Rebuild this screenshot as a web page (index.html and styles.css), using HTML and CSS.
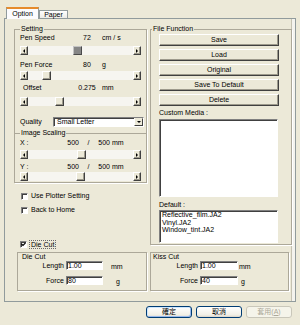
FILE: index.html
```html
<!DOCTYPE html>
<html lang="en">
<head>
    <meta charset="UTF-8">
    <title>Plotter Options</title>
    <link rel="stylesheet" href="styles.css">
</head>
<body>
    <div class="dialog">
        <div class="tabs">
            <div class="tab active">Option</div>
            <div class="tab">Paper</div>
        </div>

        <div class="panel">
            <div class="cols">
                <div class="col-left">
                    <fieldset class="group setting">
                        <legend>Setting</legend>
                        <div class="vrow"><span class="lbl">Pen Speed</span><span class="num">72</span><span class="unit">cm / s</span></div>
                        <div class="slider s1">
                            <span class="arr arr-l"></span>
                            <span class="track"><span class="thumb pressed" style="margin-left:45px"></span></span>
                            <span class="arr arr-r"></span>
                        </div>
                        <div class="vrow r2"><span class="lbl">Pen Force</span><span class="num">80</span><span class="unit">g</span></div>
                        <div class="slider s2">
                            <span class="arr arr-l"></span>
                            <span class="track"><span class="thumb" style="margin-left:14px"></span></span>
                            <span class="arr arr-r"></span>
                        </div>
                        <div class="vrow r3"><span class="lbl indent">Offset</span><span class="num">0.275</span><span class="unit">mm</span></div>
                        <div class="slider s3">
                            <span class="arr arr-l"></span>
                            <span class="track"><span class="thumb" style="margin-left:27px"></span></span>
                            <span class="arr arr-r"></span>
                        </div>
                        <div class="quality">
                            <span class="qlbl">Quality</span>
                            <div class="combo"><span class="combo-text">Small Letter</span><span class="combo-btn"></span></div>
                        </div>

                        <fieldset class="group scaling">
                            <legend>Image Scaling</legend>
                            <div class="srow"><span class="slbl">X :</span><span class="n">500</span><span class="sep">/</span><span class="n">500</span><span class="unit2">mm</span></div>
                            <div class="slider sx">
                                <span class="arr arr-l"></span>
                                <span class="track"><span class="thumb" style="margin-left:49px"></span></span>
                                <span class="arr arr-r"></span>
                            </div>
                            <div class="srow sy-row"><span class="slbl">Y :</span><span class="n">500</span><span class="sep">/</span><span class="n">500</span><span class="unit2">mm</span></div>
                            <div class="slider sy">
                                <span class="arr arr-l"></span>
                                <span class="track"><span class="thumb" style="margin-left:48px"></span></span>
                                <span class="arr arr-r"></span>
                            </div>
                        </fieldset>
                    </fieldset>

                    <label class="check plotter"><span class="box"></span>Use Plotter Setting</label>
                    <label class="check home"><span class="box"></span>Back to Home</label>
                    <label class="check diecut">
                        <span class="box"><svg width="5" height="5" viewBox="0 0 5 5"><polyline points="0.5,2 2,3.5 4.5,0.8" fill="none" stroke="#000" stroke-width="1.2"/></svg></span>
                        <span class="focus">Die Cut</span>
                    </label>
                </div>

                <fieldset class="group file-fn">
                    <legend>File Function</legend>
                    <div class="ff">
                        <div class="btn3d first">Save</div>
                        <div class="btn3d">Load</div>
                        <div class="btn3d">Original</div>
                        <div class="btn3d">Save To Default</div>
                        <div class="btn3d">Delete</div>
                        <div class="ff-label">Custom Media :</div>
                        <div class="list custom"></div>
                        <div class="ff-label def">Default :</div>
                        <div class="list default">
                            <div>Reflective_film.JA2</div>
                            <div>Vinyl.JA2</div>
                            <div>Window_tint.JA2</div>
                        </div>
                    </div>
                </fieldset>
            </div>

            <div class="cut-row">
                <div class="cutbox die">
                    <div class="cut-title">Die Cut</div>
                    <div class="crow"><span class="clbl">Length</span><input class="field" value="1.00"><span class="cunit mm">mm</span></div>
                    <div class="crow force"><span class="clbl">Force</span><input class="field" value="80"><span class="cunit g">g</span></div>
                </div>
                <div class="cutbox kiss">
                    <div class="cut-title">Kiss Cut</div>
                    <div class="crow"><span class="clbl">Length</span><input class="field" value="1.00"><span class="cunit mm">mm</span></div>
                    <div class="crow force"><span class="clbl">Force</span><input class="field" value="40"><span class="cunit g">g</span></div>
                </div>
            </div>
        </div>

        <div class="actions">
            <div class="xp-btn default">確定</div>
            <div class="xp-btn">取消</div>
            <div class="xp-btn disabled">套用(<u>A</u>)</div>
        </div>
    </div>
</body>
</html>
```

FILE: styles.css
```css
* {
    margin: 0;
    padding: 0;
    box-sizing: border-box;
}

body {
    width: 300px;
    height: 325px;
    overflow: hidden;
    background: #ece9d8;
    color: #000;
    font-family: "Liberation Sans", "Noto Sans CJK TC", sans-serif;
    font-size: 7px;
    line-height: 8px;
}

.dialog {
    padding: 7px 4px 0 4px;
}

/* tabs */
.tabs {
    position: relative;
    z-index: 1;
    display: flex;
    align-items: flex-end;
    height: 11px;
    margin-left: 2px;
}

.tab {
    width: 29px;
    height: 8px;
    border: 1px solid #919b9c;
    border-bottom: 0;
    background: linear-gradient(#ffffff, #ecebe6);
    text-align: center;
    line-height: 7px;
}

.tab.active {
    width: 33px;
    height: 12px;
    margin-bottom: -1px;
    border-top: 2px solid #e68b2c;
    background: #fcfcfe;
    line-height: 9px;
}

.panel {
    height: 284px;
    padding: 6px 4px 0 9px;
    border: 1px solid #919b9c;
    box-shadow: inset -3px 0 0 #f4f3ee, inset -4px 0 0 #c5c2b2;
    background: #ece9d8;
}

.cols {
    display: grid;
    grid-template-columns: 133px 142px;
    column-gap: 3px;
    align-items: start;
}

/* group boxes */
.group {
    border: 1px solid #aca899;
    box-shadow: 1px 1px 0 #fff;
}

.group legend {
    padding: 0 1px;
    line-height: 8px;
    background: #ece9d8;
}

.setting {
    padding: 1px 5px 0 5px;
}

.vrow {
    display: flex;
    height: 8px;
}

.vrow .lbl {
    width: 56px;
}

.vrow .lbl.indent {
    padding-left: 3px;
}

.vrow .num {
    width: 22px;
    text-align: center;
}

.vrow .unit {
    margin-left: 4px;
}

.r2 { margin-top: 6px; }
.r3 { margin-top: 4px; }

/* scroll bar style slider */
.slider {
    display: flex;
    height: 9px;
}

.s1 { margin-top: 4px; }
.s2 { margin-top: 2px; }
.s3 { margin-top: 5px; }
.sx { margin-top: 3px; }
.sy { margin-top: 1px; }

.arr {
    display: flex;
    align-items: center;
    justify-content: center;
    width: 8px;
    height: 9px;
    border: 1px solid;
    border-color: #fff #404040 #404040 #fff;
    box-shadow: inset -1px -1px 0 #9d9a8c;
    background: #ece9d8;
}

.arr::after {
    content: "";
    border-style: solid;
}

.arr-l::after {
    border-width: 2px 2px 2px 0;
    border-color: transparent #000 transparent transparent;
}

.arr-r::after {
    border-width: 2px 0 2px 2px;
    border-color: transparent transparent transparent #000;
}

.track {
    flex: 1;
    background: #f6f5f0;
}

.thumb {
    display: block;
    width: 9px;
    height: 9px;
    border: 1px solid;
    border-color: #fff #404040 #404040 #fff;
    box-shadow: inset -1px -1px 0 #9d9a8c;
    background: #ece9d8;
}

.thumb.pressed {
    border-color: #c4c4c4 #4a4a4a #4a4a4a #c4c4c4;
    box-shadow: none;
    background: #868686;
}

/* quality dropdown */
.quality {
    display: flex;
    align-items: center;
    margin-top: 11px;
}

.qlbl {
    width: 33px;
}

.combo {
    display: flex;
    flex: 1;
    height: 10px;
    margin-right: -3px;
    border: 1px solid;
    border-color: #808080 #fff #fff #808080;
    box-shadow: inset 1px 1px 0 #404040;
    background: #fff;
}

.combo-text {
    padding-left: 3px;
    line-height: 8px;
}

.combo-btn {
    display: flex;
    align-items: center;
    justify-content: center;
    width: 9px;
    margin-left: auto;
    border: 1px solid;
    border-color: #ece9d8 #404040 #404040 #fff;
    background: #ece9d8;
}

.combo-btn::after {
    content: "";
    border-style: solid;
    border-width: 2px 2px 0 2px;
    border-color: #000 transparent transparent transparent;
}

/* image scaling */
.scaling {
    margin: 2px -6px 0;
    padding: 2px 5px 1px 5px;
    border-bottom: 0;
    box-shadow: none;
}

.srow {
    display: flex;
    height: 8px;
}

.sy-row {
    margin-top: 4px;
}

.slbl {
    width: 47px;
}

.srow .n {
    width: 12px;
    text-align: right;
}

.srow .sep {
    width: 19px;
    text-align: center;
}

.unit2 {
    margin-left: 2px;
}

/* check boxes */
.check {
    display: flex;
    align-items: center;
    gap: 3px;
    height: 8px;
}

.box {
    display: flex;
    align-items: center;
    justify-content: center;
    width: 7px;
    height: 7px;
    border: 1px solid;
    border-color: #808080 #fff #fff #808080;
    box-shadow: inset 1px 1px 0 #404040;
    background: #fff;
}

.plotter {
    margin: 9px 0 0 7px;
}

.home {
    margin: 6px 0 0 7px;
}

.diecut {
    height: 9px;
    margin: 26px 0 0 6px;
    gap: 2px;
}

.focus {
    padding: 0 1px;
    border: 1px dotted #6b6b6b;
    line-height: 7px;
}

/* file function */
.file-fn {
    padding: 0 12px 1px 1px;
}

.ff {
    display: flex;
    flex-direction: column;
    margin-left: 7px;
}

.btn3d {
    height: 12px;
    margin-top: 3px;
    border: 1px solid;
    border-color: #fff #404040 #404040 #fff;
    box-shadow: inset -1px -1px 0 #9d9a8c;
    background: #ece9d8;
    text-align: center;
    line-height: 10px;
}

.btn3d.first {
    margin-top: 1px;
}

.ff-label {
    margin-top: 3px;
}

.ff-label.def {
    margin-top: 4px;
}

.list {
    width: 119px;
    border: 1px solid;
    border-color: #808080 #fff #fff #808080;
    box-shadow: inset 1px 1px 0 #404040;
    background: #fff;
}

.list.custom {
    height: 78px;
    margin-top: 2px;
}

.list.default {
    height: 33px;
    margin-top: 1px;
    padding: 0 2px;
    line-height: 7.5px;
}

/* cut settings */
.cut-row {
    display: flex;
    margin-top: 3px;
}

.cutbox {
    height: 39px;
    margin-left: 3px;
    border: 1px solid #aca899;
    box-shadow: 1px 1px 0 #fff;
}

.cutbox.die {
    width: 130px;
    padding-left: 4px;
}

.cutbox.kiss {
    width: 139px;
    padding-left: 2px;
}

.crow {
    display: flex;
    align-items: center;
    height: 9px;
}

.crow.force {
    margin-top: 6px;
}

.clbl {
    text-align: right;
}

.die .clbl { width: 42px; }
.kiss .clbl { width: 45px; }

.field {
    width: 37px;
    height: 9px;
    margin-left: 2px;
    padding: 0 1px;
    border: 1px solid;
    border-color: #808080 #fff #fff #808080;
    box-shadow: inset 1px 1px 0 #404040;
    background: #fff;
    font: inherit;
    line-height: 7px;
    outline: none;
}

.kiss .field { width: 38px; }

.cunit {
    align-self: flex-end;
    line-height: 7px;
}

.die .mm { margin-left: 8px; }
.die .g { margin-left: 13px; }
.kiss .mm { margin-left: 1px; }
.kiss .g { margin-left: 3px; }

/* dialog buttons */
.actions {
    display: flex;
    justify-content: flex-end;
    gap: 4px;
    margin-top: 4px;
    padding-right: 4px;
}

.xp-btn {
    width: 46px;
    height: 12px;
    border: 1px solid #003c74;
    border-radius: 3px;
    background: linear-gradient(#ffffff, #f1efe6 80%, #d8d2c6);
    text-align: center;
    line-height: 10px;
}

.xp-btn.default {
    box-shadow: inset -1px -1px 0 #98b8ea, inset 1px 1px 0 #cee7ff;
}

.xp-btn.disabled {
    border-color: #c9c7ba;
    background: #f5f4ea;
    color: #aca899;
}
```
